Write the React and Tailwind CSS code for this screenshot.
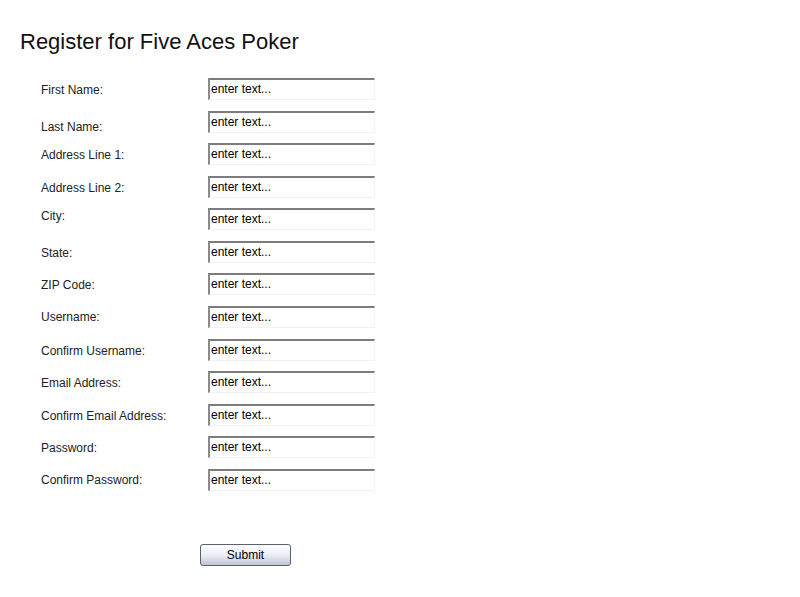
import React from "react";

const fields = [
  { label: "First Name:", nudge: "pt-[2px]" },
  { label: "Last Name:", nudge: "pt-[10px]" },
  { label: "Address Line 1:", nudge: "pt-[2px]" },
  { label: "Address Line 2:", nudge: "pt-[2px]" },
  { label: "City:", nudge: "pb-[6px]" },
  { label: "State:", nudge: "pt-[2px]" },
  { label: "ZIP Code:", nudge: "pt-[2px]" },
  { label: "Username:", nudge: "" },
  { label: "Confirm Username:", nudge: "pt-[2px]" },
  { label: "Email Address:", nudge: "pt-[2px]" },
  { label: "Confirm Email Address:", nudge: "pt-[2px]" },
  { label: "Password:", nudge: "pt-[2px]" },
  { label: "Confirm Password:", nudge: "" },
];

const App = () => {
  return (
    <div className="min-h-[597px] w-[800px] bg-white text-[#111] font-['Liberation_Sans',Arial,sans-serif]">
      <h1 className="pl-[20px] pt-[29px] text-[22px] leading-[25px] font-normal">
        Register for Five Aces Poker
      </h1>

      {/* form rows */}
      <div className="mt-[24px] pl-[41px] flex flex-col gap-[10.58px]">
        {fields.map((f) => (
          <div key={f.label} className="flex items-center h-[22px]">
            <div className={`w-[167px] text-[12px] leading-[14px] text-[#222] ${f.nudge}`}>
              {f.label}
            </div>
            <input
              type="text"
              defaultValue="enter text..."
              className="w-[167px] h-[22px] pl-[1px] pb-[1px] text-[12px] text-black bg-white outline-none border-t-2 border-l-2 border-r border-b border-t-[#7c7c7c] border-l-[#8a8a8a] border-r-[#f2f2f2] border-b-[#f2f2f2] font-['Liberation_Sans',Arial,sans-serif]"
            />
          </div>
        ))}
      </div>

      <div className="pl-[200px] mt-[51px]">
        <button className="w-[91px] h-[22px] rounded-[3px] border border-[#5a6070] bg-gradient-to-b from-white via-[#eceef5] to-[#bfc4d6] text-[12px] text-black leading-none">
          Submit
        </button>
      </div>
    </div>
  );
};

export default App;
